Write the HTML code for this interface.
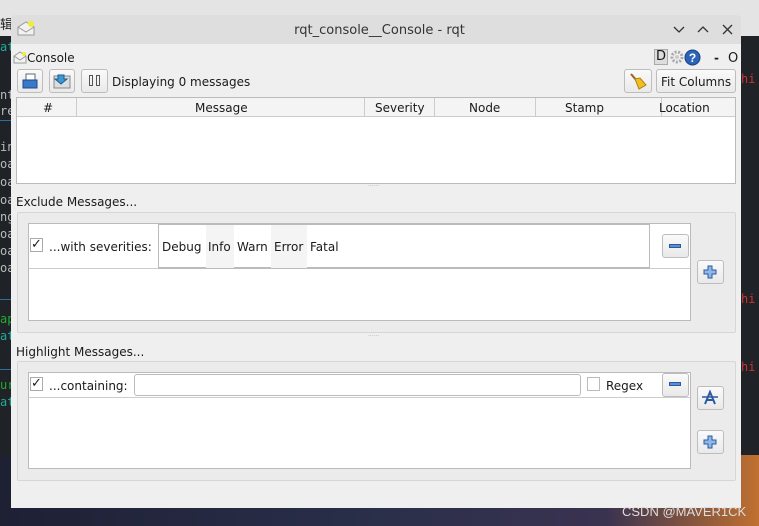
<!DOCTYPE html>
<html><head><meta charset="utf-8"><style>
*{margin:0;padding:0;box-sizing:border-box}
body{width:759px;height:526px;position:relative;overflow:hidden;background:#1f2227;font-family:"DejaVu Sans","Liberation Sans",sans-serif;font-size:12px;color:#1a1a1a}
.a{position:absolute}
.btn{position:absolute;border:1px solid #bdbdbd;border-radius:3px;background:linear-gradient(#fafafa,#e9e9e9)}
.t{position:absolute;white-space:nowrap;margin-top:1px}
.term{position:absolute;left:0;font-family:"DejaVu Sans Mono",monospace;font-size:12px}
.cb{position:absolute;width:13px;height:14px;border:1px solid #aaa;background:#fff;font-size:13px;line-height:12px;text-align:center}
</style></head><body>
<div class="a" style="left:0;top:0;width:759px;height:36px;background:#e4e4e4"></div>
<div class="t" style="left:0;top:13px;font-family:'Noto Sans CJK SC',sans-serif;font-size:13px">辑</div>
<div class="a" style="left:0;top:455px;width:759px;height:71px;background:linear-gradient(90deg,#1e2034,#2a2f4a 50%,#3a3350 80%,#c07030)"></div>
<div class="term" style="top:40px;color:#2a9">at</div>
<div class="term" style="top:88px;color:#bbb">nt</div>
<div class="term" style="top:104px;color:#bbb">re</div>
<div class="term" style="top:140px;color:#bbb">in</div>
<div class="term" style="top:157px;color:#bbb">oa</div>
<div class="term" style="top:175px;color:#bbb">oa</div>
<div class="term" style="top:193px;color:#bbb">oa</div>
<div class="term" style="top:210px;color:#bbb">ng</div>
<div class="term" style="top:227px;color:#bbb">oa</div>
<div class="term" style="top:244px;color:#bbb">oa</div>
<div class="term" style="top:261px;color:#bbb">oa</div>
<div class="term" style="top:312px;color:#2a3">ap</div>
<div class="term" style="top:329px;color:#2a9">at</div>
<div class="term" style="top:378px;color:#2a3">ur</div>
<div class="term" style="top:395px;color:#2a9">at</div>
<div class="term" style="left:741px;top:72px;color:#c33">hi</div>
<div class="term" style="left:741px;top:292px;color:#c33">hi</div>
<div class="term" style="left:741px;top:360px;color:#c33">hi</div>
<div class="a" style="left:0;top:120px;width:11px;height:1px;background:#2a6fa0"></div>
<div class="a" style="left:0;top:299px;width:11px;height:1px;background:#2a6fa0"></div>
<div class="a" style="left:0;top:369px;width:11px;height:1px;background:#2a6fa0"></div>

<div class="a" style="left:11px;top:15px;width:730px;height:493px;background:#efefef;border-radius:4px 4px 0 0"></div>
<div class="a" style="left:11px;top:15px;width:730px;height:29px;background:#dedede;border-radius:4px 4px 0 0"></div>
<svg class="a" style="left:16px;top:19px" width="20" height="18"><path d="M2 8 L10 3 L18 8 V16 H2Z" fill="#f2f2f2" stroke="#999"/><path d="M2 8 L10 13 L18 8" fill="none" stroke="#999"/><circle cx="15" cy="5" r="3" fill="#ee3"/></svg>
<div class="t" style="left:0;width:759px;text-align:center;top:22px;font-size:13px;color:#333">rqt_console__Console - rqt</div>
<svg class="a" style="left:671px;top:22px" width="64" height="16" fill="none" stroke="#333" stroke-width="1.3"><path d="M3 5 L8 10 L13 5"/><path d="M27 10 L32 5 L37 10"/><path d="M52 3 L61 12 M61 3 L52 12"/></svg>

<svg class="a" style="left:13px;top:51px" width="14" height="13"><path d="M1 5 L7 1 L13 5 V12 H1Z" fill="#f2f2f2" stroke="#999"/><path d="M1 5 L7 9 L13 5" fill="none" stroke="#999"/><circle cx="11" cy="3" r="2" fill="#ee3"/></svg>
<div class="t" style="left:27px;top:50px">Console</div>
<div class="a" style="left:654px;top:49px;width:14px;height:16px;background:#ddd;border:1px solid #aaa;font-size:13px;text-align:center;line-height:14px">D</div>
<svg class="a" style="left:669px;top:49px" width="16" height="16"><circle cx="8" cy="8" r="5" fill="none" stroke="#aaa" stroke-width="3" stroke-dasharray="2 1.5"/><circle cx="8" cy="8" r="2" fill="#ccc"/></svg>
<svg class="a" style="left:684px;top:49px" width="17" height="17"><circle cx="8.5" cy="8.5" r="7.5" fill="#2a63b8" stroke="#1a3f80"/><text x="8.5" y="13" text-anchor="middle" font-size="12" font-weight="bold" fill="#fff" font-family="Liberation Sans">?</text></svg>
<div class="t" style="left:714px;top:50px;font-weight:bold">-</div>
<div class="t" style="left:728px;top:50px;font-size:13px">O</div>

<div class="btn" style="left:17px;top:69px;width:26px;height:24px"></div>
<svg class="a" style="left:21px;top:72px" width="18" height="18"><rect x="5" y="2" width="9" height="8" fill="#fff" stroke="#667"/><rect x="2" y="8" width="14" height="8" fill="#3a78c8" stroke="#1e4a8a"/></svg>
<div class="btn" style="left:49px;top:69px;width:26px;height:24px"></div>
<svg class="a" style="left:53px;top:72px" width="18" height="18"><rect x="1" y="4" width="16" height="12" fill="#ddd" stroke="#888"/><path d="M5 3 H11 V7 H14 L8 12 L2 7 H5Z" fill="#3a9ad8" stroke="#1e5a8a"/></svg>
<div class="btn" style="left:81px;top:69px;width:27px;height:24px"></div>
<div class="a" style="left:89px;top:75px;width:4px;height:11px;border:1px solid #555"></div>
<div class="a" style="left:96px;top:75px;width:4px;height:11px;border:1px solid #555"></div>
<div class="t" style="left:112px;top:74px">Displaying 0 messages</div>
<div class="btn" style="left:624px;top:69px;width:28px;height:24px"></div>
<svg class="a" style="left:628px;top:72px" width="20" height="18"><path d="M3 2 L9 9" stroke="#a06020" stroke-width="2"/><path d="M7 7 L12 6 L18 13 L11 17 Z" fill="#f0c020" stroke="#b08010"/></svg>
<div class="btn" style="left:656px;top:69px;width:80px;height:24px"></div>
<div class="t" style="left:661px;top:74px">Fit Columns</div>

<div class="a" style="left:16px;top:97px;width:720px;height:87px;background:#fff;border:1px solid #bbb"></div>
<div class="a" style="left:17px;top:98px;width:718px;height:19px;background:#f4f4f4;border-bottom:1px solid #ccc"></div>
<div class="a" style="left:76px;top:98px;width:1px;height:19px;background:#ccc"></div>
<div class="a" style="left:364px;top:98px;width:1px;height:19px;background:#ccc"></div>
<div class="a" style="left:434px;top:98px;width:1px;height:19px;background:#ccc"></div>
<div class="a" style="left:535px;top:98px;width:1px;height:19px;background:#ccc"></div>
<div class="a" style="left:661px;top:98px;width:1px;height:19px;background:#ccc"></div>
<div class="t" style="left:43px;top:100px">#</div>
<div class="t" style="left:195px;top:100px">Message</div>
<div class="t" style="left:375px;top:100px">Severity</div>
<div class="t" style="left:469px;top:100px">Node</div>
<div class="t" style="left:565px;top:100px">Stamp</div>
<div class="t" style="left:659px;top:100px">Location</div>
<div class="t" style="left:368px;top:180px;font-size:6px;color:#aaa">......</div>

<div class="t" style="left:16px;top:194px">Exclude Messages...</div>
<div class="a" style="left:17px;top:212px;width:719px;height:121px;border:1px solid #d6d6d6;border-radius:2px;background:#ebebeb"></div>
<div class="a" style="left:28px;top:223px;width:663px;height:98px;background:#fff;border:1px solid #bbb"></div>
<div class="a" style="left:29px;top:268px;width:661px;height:1px;background:#ccc"></div>
<div class="cb" style="left:30px;top:238px">✓</div>
<div class="t" style="left:49px;top:239px">...with severities:</div>
<div class="a" style="left:158px;top:224px;width:492px;height:45px;border:1px solid #bbb;border-bottom-width:2px;background:#fff"></div>
<div class="a" style="left:206px;top:225px;width:28px;height:43px;background:#f4f4f4"></div>
<div class="a" style="left:271px;top:225px;width:36px;height:43px;background:#f4f4f4"></div>
<div class="t" style="left:162px;top:239px">Debug</div>
<div class="t" style="left:208px;top:239px">Info</div>
<div class="t" style="left:237px;top:239px">Warn</div>
<div class="t" style="left:274px;top:239px">Error</div>
<div class="t" style="left:310px;top:239px">Fatal</div>
<div class="btn" style="left:662px;top:234px;width:27px;height:24px"></div>
<div class="a" style="left:669px;top:244px;width:12px;height:4px;background:#5b8fd0;border:1px solid #2a5aa0"></div>
<div class="btn" style="left:697px;top:260px;width:27px;height:24px"></div>
<svg class="a" style="left:703px;top:265px" width="14" height="14"><path d="M5 1H9V5H13V9H9V13H5V9H1V5H5Z" fill="#8fb8e8" stroke="#2a5aa0"/></svg>
<div class="t" style="left:368px;top:330px;font-size:6px;color:#aaa">......</div>

<div class="t" style="left:16px;top:344px">Highlight Messages...</div>
<div class="a" style="left:17px;top:361px;width:719px;height:120px;border:1px solid #d6d6d6;border-radius:2px;background:#ebebeb"></div>
<div class="a" style="left:28px;top:372px;width:663px;height:97px;background:#fff;border:1px solid #bbb"></div>
<div class="a" style="left:29px;top:397px;width:661px;height:1px;background:#ccc"></div>
<div class="cb" style="left:30px;top:377px">✓</div>
<div class="t" style="left:49px;top:378px">...containing:</div>
<div class="a" style="left:134px;top:374px;width:447px;height:22px;border:1px solid #bbb;border-radius:3px;background:#fff"></div>
<div class="cb" style="left:587px;top:377px;border-color:#bbb"></div>
<div class="t" style="left:606px;top:378px">Regex</div>
<div class="btn" style="left:662px;top:373px;width:27px;height:24px"></div>
<div class="a" style="left:669px;top:382px;width:12px;height:4px;background:#5b8fd0;border:1px solid #2a5aa0"></div>
<div class="btn" style="left:697px;top:386px;width:27px;height:24px"></div>
<svg class="a" style="left:701px;top:389px" width="18" height="18"><path d="M4 15 L9 3 L14 15 M6 11 H12" fill="none" stroke="#2a5aa0" stroke-width="2"/><path d="M1 8 H17" stroke="#2a5aa0" stroke-width="1.5"/></svg>
<div class="btn" style="left:697px;top:430px;width:27px;height:24px"></div>
<svg class="a" style="left:703px;top:435px" width="14" height="14"><path d="M5 1H9V5H13V9H9V13H5V9H1V5H5Z" fill="#8fb8e8" stroke="#2a5aa0"/></svg>

<div class="t" style="left:622px;top:503px;font-size:13px;color:#ddd;font-family:'Liberation Sans',sans-serif">CSDN @MAVER1CK</div>
</body></html>
